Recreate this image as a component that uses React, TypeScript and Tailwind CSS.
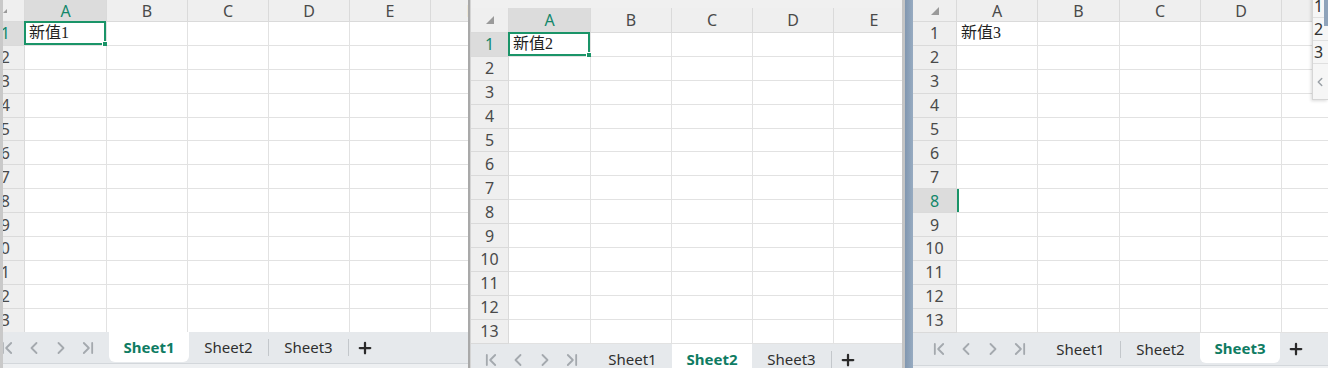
import { ChevronFirst, ChevronLeft, ChevronRight, ChevronLast, Plus } from 'lucide-react';

const rows = [1, 2, 3, 4, 5, 6, 7, 8, 9, 10, 11, 12, 13];
const tabs = ['Sheet1', 'Sheet2', 'Sheet3'];

type Col = { name: string; w: string };

type SheetProps = {
  className: string;
  rowHeadW: string;
  headH: string;
  gridH: string;
  barH: string;
  navW: string;
  cols: Col[];
  topPad?: boolean;
  bottomStrip?: boolean;
  numRight?: boolean;
  selHead?: boolean;
  selRow: number;
  selBox: boolean;
  value: string;
  active: number;
};

function Corner({ numRight }: { numRight?: boolean }) {
  return (
    <svg width="8" height="8" viewBox="0 0 8 8" className={numRight ? 'mr-[17px]' : ''}>
      <polygon points="8,0 8,8 0,8" fill="#9a9a9a" />
    </svg>
  );
}

function Sheet(p: SheetProps) {
  return (
    <div className={`flex flex-col overflow-hidden shrink-0 ${p.className}`}>
      {p.topPad && <div className="h-[8px] shrink-0 bg-[#f0f0f0]" />}
      <div className={`shrink-0 overflow-hidden ${p.gridH}`}>
        {/* header row */}
        <div className={`flex ${p.headH}`}>
          <div
            className={`${p.rowHeadW} shrink-0 flex items-center ${p.numRight ? 'justify-end' : 'justify-center'} bg-[#efefef] border-r border-b border-[#dadada] overflow-hidden`}
          >
            <Corner numRight={p.numRight} />
          </div>
          {p.cols.map((c, i) => (
            <div
              key={i}
              className={`${c.w} shrink-0 flex items-center justify-center border-r border-b border-[#dadada] text-[16px] ${
                p.selHead && i === 0 ? 'bg-[#dcdcdc] text-[#12876a]' : 'bg-[#efefef] text-[#4a4a4a]'
              }`}
            >
              {c.name}
            </div>
          ))}
        </div>
        {rows.map((r) => (
          <div key={r} className="flex h-[23.9px]">
            <div
              className={`${p.rowHeadW} shrink-0 flex items-center ${p.numRight ? 'justify-end pr-[14px]' : 'justify-center'} border-r border-b border-[#dadada] text-[16px] overflow-hidden whitespace-nowrap ${
                r === p.selRow ? 'bg-[#dcdcdc] text-[#12876a]' : 'bg-[#efefef] text-[#4a4a4a]'
              }`}
            >
              {r}
            </div>
            {p.cols.map((c, i) => (
              <div key={i} className={`${c.w} shrink-0 relative border-r border-b border-[#e2e2e2] bg-white`}>
                {r === 1 && i === 0 && (
                  <span className="absolute left-[4px] top-0 h-full flex items-center text-[16px] text-[#222] font-['Liberation_Serif','Noto_Sans_CJK_SC',serif] whitespace-nowrap">
                    {p.value}
                  </span>
                )}
                {p.selBox && r === 1 && i === 0 && (
                  <div className="absolute left-[-1px] top-[-1px] right-0 bottom-0 border-2 border-[#1a9468]">
                    <div className="absolute right-[-4px] bottom-[-4px] w-[6px] h-[6px] bg-[#1a9468] border border-white" />
                  </div>
                )}
                {!p.selBox && r === p.selRow && i === 0 && (
                  <div className="absolute left-0 top-0 bottom-0 w-[2px] bg-[#1a9468]" />
                )}
              </div>
            ))}
          </div>
        ))}
      </div>
      <TabBar barH={p.barH} navW={p.navW} active={p.active} />
      {p.bottomStrip && <div className="flex-1 border-t border-[#d3d7db] bg-[#eef0f2]" />}
    </div>
  );
}

function TabBar({ barH, navW, active }: { barH: string; navW: string; active: number }) {
  return (
    <div className={`${barH} shrink-0 flex items-start bg-[#e6e9ec] font-['Noto_Sans',sans-serif] text-[15px]`}>
      <div className={`${navW} shrink-0 h-full flex items-center justify-end gap-[7px] pr-[11px] overflow-hidden text-[#a4a9ae]`}>
        <ChevronFirst size={20} strokeWidth={2.2} className="shrink-0" />
        <ChevronLeft size={20} strokeWidth={2.2} className="shrink-0" />
        <ChevronRight size={20} strokeWidth={2.2} className="shrink-0" />
        <ChevronLast size={20} strokeWidth={2.2} className="shrink-0" />
      </div>
      {tabs.map((t, i) => {
        const isActive = i === active;
        const sep = !isActive && i + 1 !== active;
        return (
          <div key={t} className="flex items-center h-full">
            {isActive ? (
              <div className="w-[80px] h-[30px] self-start flex items-center justify-center bg-white rounded-b-[6px] font-bold text-[#0f7c63]">
                {t}
              </div>
            ) : (
              <div className="w-[79px] h-full flex items-center justify-center text-[#2f2f2f]">{t}</div>
            )}
            {sep && <div className="w-px h-[17px] bg-[#c3c7cb]" />}
          </div>
        );
      })}
      <div className="h-full flex items-center ml-[7px] text-[#2a2a2a]">
        <Plus size={18} strokeWidth={3} />
      </div>
    </div>
  );
}

export default function App() {
  return (
    <div className="w-[1328px] h-[368px] flex overflow-hidden bg-white font-['Noto_Sans',sans-serif]">
      <div className="w-[3px] h-full shrink-0 bg-[#c9c9c9]" />
      <Sheet
        className="w-[465px] h-full"
        rowHeadW="w-[22px]"
        headH="h-[22px]"
        gridH="h-[332px]"
        barH="h-[31px]"
        navW="w-[106px]"
        cols={[
          { name: 'A', w: 'w-[82px]' },
          { name: 'B', w: 'w-[81px]' },
          { name: 'C', w: 'w-[81px]' },
          { name: 'D', w: 'w-[81px]' },
          { name: 'E', w: 'w-[81px]' },
          { name: 'F', w: 'w-[81px]' },
        ]}
        numRight
        bottomStrip
        selHead
        selRow={1}
        selBox
        value="新值1"
        active={0}
      />
      <div className="w-[3px] h-full shrink-0 flex">
        <div className="w-[2px] bg-[#a9a9a9]" />
        <div className="w-px bg-[#d4d4d4]" />
      </div>
      <Sheet
        className="w-[431px] h-full"
        rowHeadW="w-[38px]"
        headH="h-[25px]"
        gridH="h-[336px]"
        barH="h-[31px]"
        navW="w-[122px]"
        cols={[
          { name: 'A', w: 'w-[82px]' },
          { name: 'B', w: 'w-[81px]' },
          { name: 'C', w: 'w-[81px]' },
          { name: 'D', w: 'w-[81px]' },
          { name: 'E', w: 'w-[81px]' },
        ]}
        topPad
        selHead
        selRow={1}
        selBox
        value="新值2"
        active={1}
      />
      <div className="w-[3px] h-full shrink-0 bg-[#c4c4c4]" />
      <div className="w-[8px] h-full shrink-0 bg-gradient-to-r from-[#8197b0] to-[#97abc1]" />
      <div className="relative flex-1 h-full overflow-hidden">
        <Sheet
          className="w-[415px] h-full"
          rowHeadW="w-[44px]"
          headH="h-[22px]"
          gridH="h-[333px]"
          barH="h-[32px]"
          navW="w-[128px]"
          cols={[
            { name: 'A', w: 'w-[81px]' },
            { name: 'B', w: 'w-[82px]' },
            { name: 'C', w: 'w-[81px]' },
            { name: 'D', w: 'w-[81px]' },
            { name: '', w: 'w-[81px]' },
          ]}
          bottomStrip
          selRow={8}
          selBox={false}
          value="新值3"
          active={2}
        />
        {/* side popup */}
        <div className="absolute right-0 top-[-5px] w-[16px] h-[105px] flex flex-col bg-[#f6f6f6] border-l border-[#d6d6d6] shadow-[-1px_1px_3px_rgba(0,0,0,0.15)] text-[16px] text-[#333]">
          {[1, 2, 3].map((n) => (
            <div key={n} className="h-[23px] flex items-center pl-px border-b border-[#e0e0e0]">
              {n}
            </div>
          ))}
          <div className="flex-1 flex items-center text-[#9aa0a6] border-b border-[#d6d6d6]">
            <ChevronLeft size={14} strokeWidth={2.5} />
          </div>
          <div className="absolute right-0 top-0 w-[4px] h-[31px] bg-[#8fa3ba]" />
        </div>
      </div>
    </div>
  );
}
